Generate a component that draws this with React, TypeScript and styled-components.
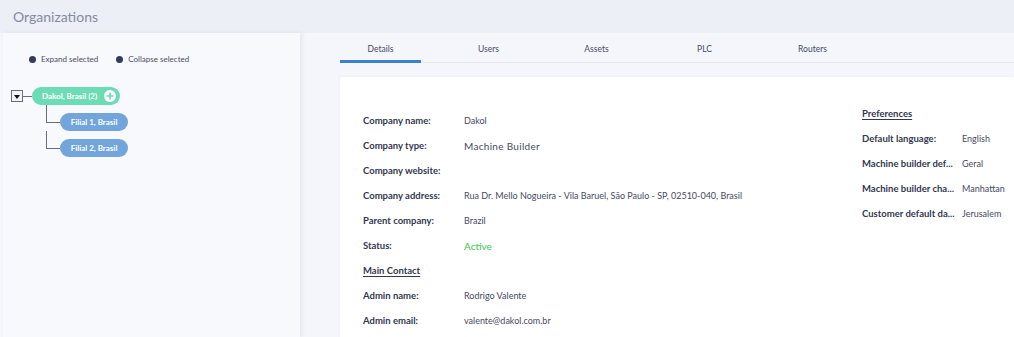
import React from 'react';
import styled, { createGlobalStyle } from 'styled-components';

const GlobalStyle = createGlobalStyle`
  html, body {
    margin: 0;
    padding: 0;
    background: #f4f6fb;
    font-family: Lato, "Open Sans", sans-serif;
    overflow: hidden;
  }
`;

const Page = styled.div`
  width: 1014px;
  height: 337px;
  display: flex;
  flex-direction: column;
  background: #f4f6fb;
`;

const Header = styled.header`
  height: 33px;
  flex: 0 0 33px;
  display: flex;
  align-items: center;
  padding-left: 13px;
  background: #eceff6;
`;

const Title = styled.h1`
  margin: 0;
  font-size: 14px;
  font-weight: 400;
  color: #858aa3;
`;

const Main = styled.div`
  flex: 1;
  display: flex;
  min-height: 0;
`;

const Sidebar = styled.aside`
  width: 297px;
  margin-left: 3px;
  background: #f8f9fd;
  box-shadow: 2px 0 4px rgba(40, 50, 90, 0.08);
  padding: 21px 0 0 8px;
  box-sizing: border-box;
`;

const Legend = styled.div`
  display: flex;
  align-items: center;
  gap: 18px;
  padding-left: 18px;
  margin-bottom: 23px;
`;

const LegendItem = styled.span`
  display: flex;
  align-items: center;
  gap: 5px;
  font-size: 8px;
  color: #4a4d66;
`;

const Dot = styled.span`
  width: 7px;
  height: 7px;
  border-radius: 50%;
  background: #363a62;
`;

const Tree = styled.div`
  display: flex;
  flex-direction: column;
`;

const RootRow = styled.div`
  display: flex;
  align-items: center;
`;

const Toggle = styled.span`
  width: 10px;
  height: 10px;
  border: 1px solid #6a6c7e;
  background: #f2f3f7;
  display: flex;
  align-items: center;
  justify-content: center;

  &::after {
    content: '';
    border-left: 3.5px solid transparent;
    border-right: 3.5px solid transparent;
    border-top: 4px solid #111;
    margin-top: 1px;
  }
`;

const HLine = styled.span<{ w: number }>`
  width: ${(p) => p.w}px;
  height: 1px;
  background: #6a6c7e;
`;

const Pill = styled.span<{ tone: 'green' | 'blue'; w: number }>`
  width: ${(p) => p.w}px;
  height: 18px;
  border-radius: 9px;
  background: ${(p) => (p.tone === 'green' ? '#6ddcb6' : '#72a5dc')};
  color: #fff;
  font-size: 8px;
  font-weight: 700;
  display: flex;
  align-items: center;
  justify-content: ${(p) => (p.tone === 'green' ? 'space-between' : 'center')};
  padding: ${(p) => (p.tone === 'green' ? '0 4px 0 10px' : '0')};
  box-sizing: border-box;
  white-space: nowrap;
`;

const PlusBtn = styled.span`
  width: 12px;
  height: 12px;
  border-radius: 50%;
  background: #fff;
  display: flex;
  align-items: center;
  justify-content: center;
`;

const Children = styled.div`
  display: flex;
  flex-direction: column;
  gap: 8px;
  margin: 8px 0 0 35px;
`;

const ChildRow = styled.div`
  position: relative;
  display: flex;
  align-items: center;

  &::before {
    content: '';
    position: absolute;
    left: 0;
    top: -8px;
    width: 1px;
    height: calc(50% + 8px);
    background: #6a6c7e;
  }
`;

const Content = styled.section`
  flex: 1;
  display: flex;
  flex-direction: column;
  padding-left: 40px;
  min-width: 0;
`;

const Tabs = styled.nav`
  display: flex;
  gap: 27px;
  height: 29px;
  border-bottom: 1px solid #e3e7f0;
`;

const Tab = styled.span<{ active?: boolean }>`
  width: 81px;
  display: flex;
  align-items: center;
  justify-content: center;
  padding-top: 4px;
  font-size: 8.5px;
  color: #474a63;
  box-sizing: border-box;
  border-bottom: 3px solid ${(p) => (p.active ? '#3b80d0' : 'transparent')};
  margin-bottom: -1px;
`;

const Card = styled.div`
  flex: 1;
  margin-top: 14px;
  background: #fff;
  border-radius: 3px 0 0 0;
  box-shadow: 0 0 3px rgba(40, 50, 90, 0.06);
  display: flex;
  padding: 31px 0 0 23px;
`;

const Column = styled.div<{ w?: number; offset?: number }>`
  ${(p) => (p.w ? `flex: 0 0 ${p.w}px;` : 'flex: 1;')}
  margin-top: ${(p) => p.offset ?? 0}px;
  display: flex;
  flex-direction: column;
`;

const Row = styled.div<{ labelW: number }>`
  height: 25px;
  display: grid;
  grid-template-columns: ${(p) => p.labelW}px auto;
  align-items: center;
`;

const Label = styled.span`
  font-size: 9.5px;
  font-weight: 700;
  color: #34374f;
  white-space: nowrap;
`;

const Value = styled.span<{ kind?: 'big' | 'active' }>`
  font-size: ${(p) => (p.kind ? '10px' : '9px')};
  letter-spacing: ${(p) => (p.kind === 'big' ? '0.3px' : '0')};
  color: ${(p) => (p.kind === 'active' ? '#3ec64c' : '#474a60')};
  white-space: nowrap;
`;

const SectionTitle = styled.div`
  height: 25px;
  display: flex;
  align-items: center;
  font-size: 9.5px;
  font-weight: 700;
  color: #34374f;
  text-decoration: underline;
  text-underline-offset: 2px;
`;

const details: { label: string; value?: string; kind?: 'big' | 'active' }[] = [
  { label: 'Company name:', value: 'Dakol' },
  { label: 'Company type:', value: 'Machine Builder', kind: 'big' },
  { label: 'Company website:' },
  {
    label: 'Company address:',
    value: 'Rua Dr. Mello Nogueira - Vila Baruel, São Paulo - SP, 02510-040, Brasil',
  },
  { label: 'Parent company:', value: 'Brazil' },
  { label: 'Status:', value: 'Active', kind: 'active' },
];

const contact = [
  { label: 'Admin name:', value: 'Rodrigo Valente' },
  { label: 'Admin email:', value: 'valente@dakol.com.br' },
];

const preferences = [
  { label: 'Default language:', value: 'English' },
  { label: 'Machine builder def...', value: 'Geral' },
  { label: 'Machine builder cha...', value: 'Manhattan' },
  { label: 'Customer default da...', value: 'Jerusalem' },
];

const tabs = ['Details', 'Users', 'Assets', 'PLC', 'Routers'];

const App: React.FC = () => (
  <>
    <GlobalStyle />
    <Page>
      <Header>
        <Title>Organizations</Title>
      </Header>
      <Main>
        <Sidebar>
          <Legend>
            <LegendItem>
              <Dot />
              Expand selected
            </LegendItem>
            <LegendItem>
              <Dot />
              Collapse selected
            </LegendItem>
          </Legend>
          <Tree>
            <RootRow>
              <Toggle />
              <HLine w={9} />
              <Pill tone="green" w={88}>
                Dakol, Brasil (2)
                <PlusBtn>
                  <svg width="8" height="8" viewBox="0 0 8 8">
                    <path d="M4 0.5v7M0.5 4h7" stroke="#6ddcb6" strokeWidth="1.6" />
                  </svg>
                </PlusBtn>
              </Pill>
            </RootRow>
            <Children>
              {['Filial 1, Brasil', 'Filial 2, Brasil'].map((name) => (
                <ChildRow key={name}>
                  <HLine w={14} />
                  <Pill tone="blue" w={68}>
                    {name}
                  </Pill>
                </ChildRow>
              ))}
            </Children>
          </Tree>
        </Sidebar>
        <Content>
          <Tabs>
            {tabs.map((t, i) => (
              <Tab key={t} active={i === 0}>
                {t}
              </Tab>
            ))}
          </Tabs>
          <Card>
            <Column w={499}>
              {details.map((d) => (
                <Row key={d.label} labelW={101}>
                  <Label>{d.label}</Label>
                  <Value kind={d.kind}>{d.value}</Value>
                </Row>
              ))}
              <SectionTitle>Main Contact</SectionTitle>
              {contact.map((d) => (
                <Row key={d.label} labelW={101}>
                  <Label>{d.label}</Label>
                  <Value>{d.value}</Value>
                </Row>
              ))}
            </Column>
            <Column offset={-7}>
              <SectionTitle>Preferences</SectionTitle>
              {preferences.map((d) => (
                <Row key={d.label} labelW={100}>
                  <Label>{d.label}</Label>
                  <Value>{d.value}</Value>
                </Row>
              ))}
            </Column>
          </Card>
        </Content>
      </Main>
    </Page>
  </>
);

export default App;
